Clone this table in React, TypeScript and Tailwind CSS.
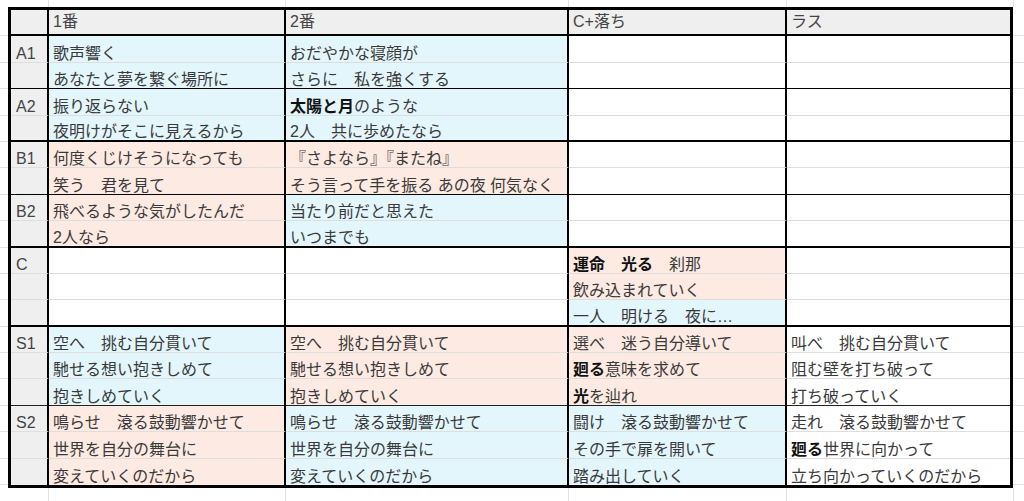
import React from 'react';

const BG = {
  b: 'bg-[#e3f6fc]',
  p: 'bg-[#fdeae2]',
  w: 'bg-white',
} as const;

type Tone = keyof typeof BG;
type Cell = [string, Tone];

const WIDTHS = ['w-[38px]', 'w-[237px]', 'w-[283px]', 'w-[218px]', 'w-[223px]'];
const GRID = ['w-[49px]', 'w-[237px]', 'w-[283px]', 'w-[218px]', 'w-[227px]'];

const E: Cell = ['', 'w'];

const sections: { label: string; end: string; rows: Cell[][] }[] = [
  {
    label: 'A1',
    end: 'border-b border-b-black',
    rows: [
      [['歌声響く', 'b'], ['おだやかな寝顔が', 'b'], E, E],
      [['あなたと夢を繋ぐ場所に', 'b'], ['さらに　私を強くする', 'b'], E, E],
    ],
  },
  {
    label: 'A2',
    end: 'border-b-2 border-b-black',
    rows: [
      [['振り返らない', 'b'], ['**太陽と月**のような', 'b'], E, E],
      [['夜明けがそこに見えるから', 'b'], ['2人　共に歩めたなら', 'b'], E, E],
    ],
  },
  {
    label: 'B1',
    end: 'border-b border-b-black',
    rows: [
      [['何度くじけそうになっても', 'p'], ['『さよなら』『またね』', 'p'], E, E],
      [['笑う　君を見て', 'p'], ['そう言って手を振る あの夜 何気なく', 'p'], E, E],
    ],
  },
  {
    label: 'B2',
    end: 'border-b-2 border-b-black',
    rows: [
      [['飛べるような気がしたんだ', 'p'], ['当たり前だと思えた', 'b'], E, E],
      [['2人なら', 'p'], ['いつまでも', 'b'], E, E],
    ],
  },
  {
    label: 'C',
    end: 'border-b-2 border-b-black',
    rows: [
      [E, E, ['**運命　光る**　刹那', 'p'], E],
      [E, E, ['飲み込まれていく', 'p'], E],
      [E, E, ['一人　明ける　夜に…', 'b'], E],
    ],
  },
  {
    label: 'S1',
    end: 'border-b border-b-[#222]',
    rows: [
      [['空へ　挑む自分貫いて', 'b'], ['空へ　挑む自分貫いて', 'p'], ['選べ　迷う自分導いて', 'p'], ['叫べ　挑む自分貫いて', 'w']],
      [['馳せる想い抱きしめて', 'b'], ['馳せる想い抱きしめて', 'p'], ['**廻る**意味を求めて', 'p'], ['阻む壁を打ち破って', 'w']],
      [['抱きしめていく', 'b'], ['抱きしめていく', 'p'], ['**光**を辿れ', 'p'], ['打ち破っていく', 'w']],
    ],
  },
  {
    label: 'S2',
    end: '',
    rows: [
      [['鳴らせ　滾る鼓動響かせて', 'p'], ['鳴らせ　滾る鼓動響かせて', 'b'], ['闘け　滾る鼓動響かせて', 'b'], ['走れ　滾る鼓動響かせて', 'w']],
      [['世界を自分の舞台に', 'p'], ['世界を自分の舞台に', 'b'], ['その手で扉を開いて', 'b'], ['**廻る**世界に向かって', 'w']],
      [['変えていくのだから', 'p'], ['変えていくのだから', 'b'], ['踏み出していく', 'b'], ['立ち向かっていくのだから', 'w']],
    ],
  },
];

function Rich({ text }: { text: string }) {
  const parts = text.split('**');
  return (
    <>
      {parts.map((p, i) =>
        i % 2 === 1 ? (
          <b key={i} className="font-bold text-[#111]">
            {p}
          </b>
        ) : (
          <span key={i}>{p}</span>
        )
      )}
    </>
  );
}

function GridStrip({ h }: { h: string }) {
  return (
    <div className={`flex ${h}`}>
      {GRID.map((w, i) => (
        <div key={i} className={`${w} shrink-0 border-r border-r-[#e2e2e2]`} />
      ))}
      <div className="flex-1" />
    </div>
  );
}

function SideStrip({ w }: { w: string }) {
  return (
    <div className={`${w} flex flex-col`}>
      <div className="h-[3px]" />
      {Array.from({ length: 18 }).map((_, i) => (
        <div key={i} className="h-[26.4px] shrink-0 border-b border-b-[#e2e2e2]" />
      ))}
    </div>
  );
}

export default function App() {
  return (
    <div className="w-[1024px] h-[501px] overflow-hidden bg-white text-[16px] leading-none text-[#3a3a3a] font-['Liberation_Sans','Noto_Sans_CJK_JP',sans-serif]">
      <GridStrip h="h-[7px]" />
      <div className="flex">
        <SideStrip w="w-[8px] shrink-0" />
        <div className="border-[3px] border-black shrink-0">
          {/* header */}
          <div className="flex">
            {['', '1番', '2番', 'C+落ち', 'ラス'].map((t, i) => (
              <div
                key={i}
                className={`${WIDTHS[i]} h-[26.4px] shrink-0 flex items-center pl-[4px] bg-[#efefef] text-[#444] border-b-2 border-b-black ${
                  i < 4 ? 'border-r-2 border-r-black' : ''
                }`}
              >
                {t}
              </div>
            ))}
          </div>
          {sections.map((s) =>
            s.rows.map((row, ri) => {
              const last = ri === s.rows.length - 1;
              const bottom = last ? s.end : 'border-b border-b-[#dedede]';
              return (
                <div key={s.label + ri} className="flex">
                  <div
                    className={`${WIDTHS[0]} h-[26.4px] shrink-0 flex items-end pl-[5px] bg-[#efefef] text-[#444] border-r-2 border-r-black ${bottom}`}
                  >
                    {ri === 0 ? s.label : ''}
                  </div>
                  {row.map(([text, tone], ci) => (
                    <div
                      key={ci}
                      className={`${WIDTHS[ci + 1]} h-[26.4px] shrink-0 flex items-end pl-[4px] overflow-hidden whitespace-nowrap ${BG[tone]} ${
                        ci < 3 ? 'border-r-2 border-r-black' : ''
                      } ${bottom}`}
                    >
                      <Rich text={text} />
                    </div>
                  ))}
                </div>
              );
            })
          )}
        </div>
        <SideStrip w="flex-1" />
      </div>
      <GridStrip h="h-[20px]" />
    </div>
  );
}
